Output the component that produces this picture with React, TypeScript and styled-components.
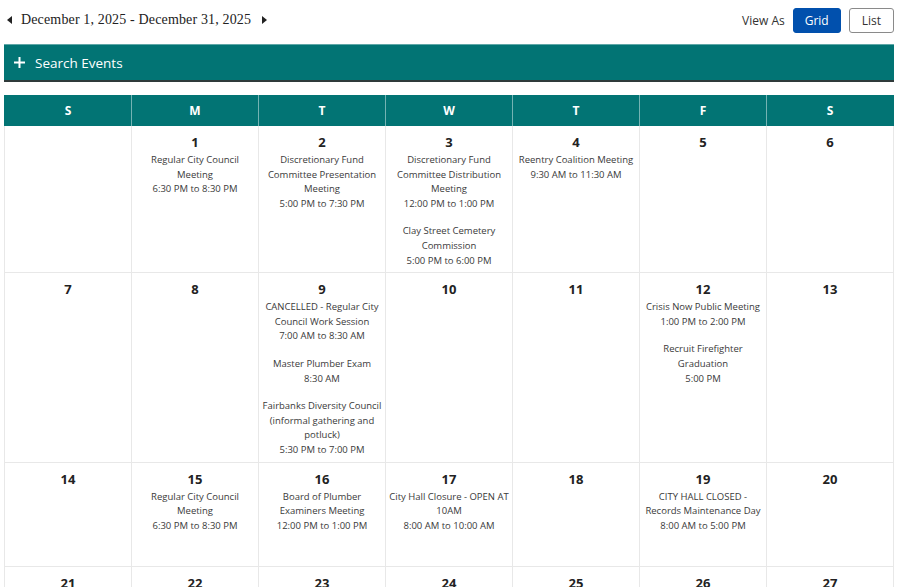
import React from "react";
import styled, { createGlobalStyle } from "styled-components";

const GlobalStyle = createGlobalStyle`
  body {
    margin: 0;
    background: #fff;
    font-family: "Open Sans", "Liberation Sans", sans-serif;
    color: #333;
  }
`;

interface IEvent {
  title: string[];
  time: string;
}

interface IDay {
  day?: number;
  events?: IEvent[];
}

const weekdays = ["S", "M", "T", "W", "T", "F", "S"];

const weeks: IDay[][] = [
  [
    {},
    {
      day: 1,
      events: [{ title: ["Regular City Council", "Meeting"], time: "6:30 PM to 8:30 PM" }],
    },
    {
      day: 2,
      events: [
        {
          title: ["Discretionary Fund", "Committee Presentation", "Meeting"],
          time: "5:00 PM to 7:30 PM",
        },
      ],
    },
    {
      day: 3,
      events: [
        {
          title: ["Discretionary Fund", "Committee Distribution", "Meeting"],
          time: "12:00 PM to 1:00 PM",
        },
        { title: ["Clay Street Cemetery", "Commission"], time: "5:00 PM to 6:00 PM" },
      ],
    },
    {
      day: 4,
      events: [{ title: ["Reentry Coalition Meeting"], time: "9:30 AM to 11:30 AM" }],
    },
    { day: 5 },
    { day: 6 },
  ],
  [
    { day: 7 },
    { day: 8 },
    {
      day: 9,
      events: [
        {
          title: ["CANCELLED - Regular City", "Council Work Session"],
          time: "7:00 AM to 8:30 AM",
        },
        { title: ["Master Plumber Exam"], time: "8:30 AM" },
        {
          title: ["Fairbanks Diversity Council", "(informal gathering and", "potluck)"],
          time: "5:30 PM to 7:00 PM",
        },
      ],
    },
    { day: 10 },
    { day: 11 },
    {
      day: 12,
      events: [
        { title: ["Crisis Now Public Meeting"], time: "1:00 PM to 2:00 PM" },
        { title: ["Recruit Firefighter", "Graduation"], time: "5:00 PM" },
      ],
    },
    { day: 13 },
  ],
  [
    { day: 14 },
    {
      day: 15,
      events: [{ title: ["Regular City Council", "Meeting"], time: "6:30 PM to 8:30 PM" }],
    },
    {
      day: 16,
      events: [
        { title: ["Board of Plumber", "Examiners Meeting"], time: "12:00 PM to 1:00 PM" },
      ],
    },
    {
      day: 17,
      events: [
        { title: ["City Hall Closure - OPEN AT", "10AM"], time: "8:00 AM to 10:00 AM" },
      ],
    },
    { day: 18 },
    {
      day: 19,
      events: [
        {
          title: ["CITY HALL CLOSED -", "Records Maintenance Day"],
          time: "8:00 AM to 5:00 PM",
        },
      ],
    },
    { day: 20 },
  ],
  [
    { day: 21 },
    { day: 22 },
    { day: 23 },
    { day: 24 },
    { day: 25 },
    { day: 26 },
    { day: 27 },
  ],
];

const Page = styled.div`
  padding: 0 6px 0 4px;
  width: 890px;
`;

const TopBar = styled.div`
  display: flex;
  align-items: center;
  justify-content: space-between;
  height: 40px;
  padding-bottom: 4px;
`;

const DateNav = styled.div`
  display: flex;
  align-items: center;
  gap: 7px;
  padding-left: 3px;
  font-family: "Liberation Serif", "DejaVu Serif", serif;
  font-size: 14px;
  color: #222;
  letter-spacing: 0.15px;
`;

const Arrow = styled.span<{ $dir: "left" | "right" }>`
  display: inline-block;
  width: 0;
  height: 0;
  border-top: 4px solid transparent;
  border-bottom: 4px solid transparent;
  ${(p) =>
    p.$dir === "left"
      ? "border-right: 5px solid #222; margin-right: 2px;"
      : "border-left: 5px solid #222; margin-left: 4px;"}
`;

const ViewAs = styled.div`
  display: flex;
  align-items: center;
  gap: 7px;
  font-size: 12px;
  color: #333;
`;

const ViewLabel = styled.span`
  margin-right: 1px;
`;

const ViewButton = styled.button<{ $active?: boolean }>`
  font-family: "Open Sans", "Liberation Sans", sans-serif;
  font-size: 12px;
  height: 25px;
  padding: 0 ${(p) => (p.$active ? "11px" : "12px")};
  border-radius: 3px;
  cursor: pointer;
  background: ${(p) => (p.$active ? "#0150ad" : "#fff")};
  color: ${(p) => (p.$active ? "#fff" : "#333")};
  border: 1px solid ${(p) => (p.$active ? "#0150ad" : "#8a8a8a")};
  margin-left: ${(p) => (p.$active ? "0" : "1px")};
`;

const SearchBar = styled.div`
  display: flex;
  align-items: center;
  gap: 9px;
  height: 35px;
  padding-left: 9px;
  background: #027474;
  border-top: 1px solid #5fa7a7;
  border-bottom: 2px solid #2f3a3a;
  color: #fff;
  font-size: 13.5px;
`;

const CalendarGrid = styled.div`
  margin-top: 13px;
  display: grid;
  grid-template-columns: repeat(7, 127px);
  border-left: 1px solid #e8e8e8;
`;

const HeadCell = styled.div`
  background: #027474;
  color: #fff;
  font-weight: 700;
  font-size: 12px;
  height: 31px;
  display: flex;
  align-items: center;
  justify-content: center;
  border-right: 1px solid #74b3b3;
  &:first-child {
    margin-left: -1px;
    border-left: 1px solid #027474;
  }
  &:nth-child(7) {
    border-right-color: #027474;
  }
`;

const DayCell = styled.div`
  min-height: 92px;
  padding: 7px 2px 4px;
  border-right: 1px solid #e8e8e8;
  border-bottom: 1px solid #e8e8e8;
  text-align: center;
`;

const DayNumber = styled.div`
  font-weight: 700;
  font-size: 13px;
  line-height: 18px;
  margin-bottom: 2px;
  color: #222;
`;

const EventBlock = styled.div`
  font-size: 9.5px;
  line-height: 14.6px;
  color: #3a3a3a;
  white-space: nowrap;
  & + & {
    margin-top: 13px;
  }
`;

const PlusIcon = () => (
  <svg width="13" height="13" viewBox="0 0 13 13">
    <path d="M6.5 1v11M1 6.5h11" stroke="#fff" strokeWidth="2" />
  </svg>
);

export default function App() {
  return (
    <Page>
      <GlobalStyle />
      <TopBar>
        <DateNav>
          <Arrow $dir="left" />
          <span>December 1, 2025 - December 31, 2025</span>
          <Arrow $dir="right" />
        </DateNav>
        <ViewAs>
          <ViewLabel>View As</ViewLabel>
          <ViewButton $active>Grid</ViewButton>
          <ViewButton>List</ViewButton>
        </ViewAs>
      </TopBar>

      <SearchBar>
        <PlusIcon />
        <span>Search Events</span>
      </SearchBar>

      <CalendarGrid>
        {weekdays.map((d, i) => (
          <HeadCell key={"h" + i}>{d}</HeadCell>
        ))}
        {weeks.map((week, wi) =>
          week.map((cell, ci) => (
            <DayCell key={wi + "-" + ci}>
              {cell.day && <DayNumber>{cell.day}</DayNumber>}
              {cell.events &&
                cell.events.map((ev, ei) => (
                  <EventBlock key={ei}>
                    {ev.title.map((t, ti) => (
                      <div key={ti}>{t}</div>
                    ))}
                    <div>{ev.time}</div>
                  </EventBlock>
                ))}
            </DayCell>
          ))
        )}
      </CalendarGrid>
    </Page>
  );
}
